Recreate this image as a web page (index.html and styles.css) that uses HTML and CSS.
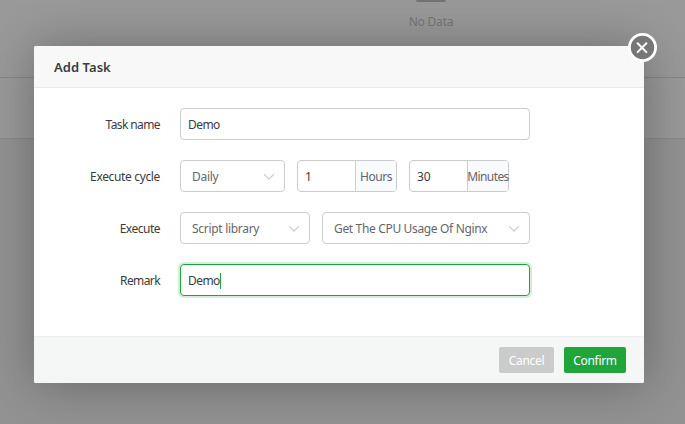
FILE: index.html
```
<!DOCTYPE html>
<html lang="en">
<head>
<meta charset="utf-8">
<title>Add Task</title>
<link rel="stylesheet" href="styles.css">
</head>
<body>
<main class="page">
  <div class="empty"><span class="empty-icon"></span><span class="empty-text">No Data</span></div>
</main>
<section class="modal" role="dialog" aria-label="Add Task">
  <header class="head">Add Task</header>
  <button class="close" aria-label="Close"><svg width="29" height="29" viewBox="0 0 29 29"><circle cx="14.5" cy="14.5" r="13.1" fill="#777" stroke="#fff" stroke-width="2.8"/><path d="M9.6 10.3l8.8 8.8M18.4 10.3l-8.8 8.8" stroke="#fff" stroke-width="2" stroke-linecap="round"/></svg></button>
  <form class="form">
    <div class="row"><label class="label t-name">Task name</label><div class="box wide"><span class="demo">Demo</span></div></div>
    <div class="row"><label class="label t-cycle">Execute cycle</label>
      <div class="box select cycle"><span>Daily</span><svg class="arrow" viewBox="0 0 12 8"><path d="M1 1.2l5 5 5-5"/></svg></div>
      <div class="box number"><span class="value">1</span><span class="unit"><span class="t-hours">Hours</span></span></div>
      <div class="box number"><span class="value">30</span><span class="unit"><span class="t-min">Minutes</span></span></div>
    </div>
    <div class="row"><label class="label t-exec">Execute</label>
      <div class="box select kind"><span>Script library</span><svg class="arrow" viewBox="0 0 12 8"><path d="M1 1.2l5 5 5-5"/></svg></div>
      <div class="box select script"><span class="t-get">Get The CPU Usage Of Nginx</span><svg class="arrow" viewBox="0 0 12 8"><path d="M1 1.2l5 5 5-5"/></svg></div>
    </div>
    <div class="row"><label class="label t-remark">Remark</label><div class="box wide focus"><span class="demo">Demo</span><i class="caret"></i></div></div>
  </form>
  <footer class="foot"><button class="btn cancel"><span>Cancel</span></button><button class="btn confirm"><span>Confirm</span></button></footer>
</section>
</body>
</html>
```
FILE: styles.css
```
* { box-sizing: border-box; }
body { margin: 0; width: 685px; height: 424px; overflow: hidden; background: #929292; color: #3b3b3b; font: 12px/16px "Noto Sans", "Open Sans", sans-serif; }
button { font: inherit; border: 0; padding: 0; }
.page { height: 139px; background: #999; border-bottom: 1px solid #8a8a8a; }
.empty { height: 78px; padding-left: 177px; display: flex; flex-direction: column; align-items: center; border-bottom: 1px solid #858585; color: #757575; }
.empty-icon { width: 30px; height: 2px; background: #737373; border-radius: 0 0 4px 4px; }
.empty-text { margin-top: 12px; letter-spacing: -.2px; }
.modal { position: absolute; left: 34px; top: 46px; width: 610px; height: 337px; display: flex; flex-direction: column; background: #fff; border-radius: 2px; box-shadow: 1px 1px 50px rgba(0,0,0,.3); }
.head { height: 42px; padding-left: 20px; border-bottom: 1px solid #eaeaea; border-radius: 2px 2px 0 0; background: #f8f8f8; font-size: 13px; font-weight: 600; line-height: 42px; letter-spacing: .05px; }
.close { position: absolute; right: -13px; top: -13px; width: 29px; height: 29px; background: none; }
.close svg { display: block; }
.form { flex: 1; padding-top: 20px; display: flex; flex-direction: column; gap: 20px; }
.row { display: flex; gap: 12px; height: 32px; }
.label { width: 126px; margin-right: 8px; line-height: 33px; text-align: right; white-space: nowrap; letter-spacing: -.35px; }
.t-name, .t-remark { letter-spacing: -.6px; }
.t-exec { letter-spacing: -.5px; }
.box { height: 32px; display: flex; align-items: center; border: 1px solid #ccc; border-radius: 4px; padding: 1px 7px 0; white-space: nowrap; }
.wide { width: 350px; }
.demo { letter-spacing: -.55px; }
.select { padding: 1px 9px 0 11px; justify-content: space-between; color: #666; letter-spacing: -.3px; }
.t-get { letter-spacing: -.34px; }
.cycle { width: 105px; }
.kind { width: 130px; }
.script { width: 208px; }
.arrow { width: 12px; height: 8px; fill: none; stroke: #c7c9cd; stroke-width: 1.1; }
.number { width: 100px; padding: 0; }
.value { flex: 1; padding: 1px 0 0 7px; letter-spacing: -.2px; }
.unit { flex: none; width: 41px; height: 30px; padding-top: 1px; display: flex; align-items: center; justify-content: center; border-left: 1px solid #ccc; border-radius: 0 3px 3px 0; background: #f9fafc; color: #666; }
.t-hours { color: #5c6472; letter-spacing: -.45px; }
.t-min { flex: none; letter-spacing: -.6px; }
.focus { border-color: #20a53a; box-shadow: 0 0 0 2px #d2edd8; }
.caret { width: 1px; height: 16px; background: #20a53a; }
.foot { height: 47px; padding-right: 18px; display: flex; align-items: center; justify-content: flex-end; gap: 10px; padding-bottom: 1px; border-top: 1px solid #edf0f0; border-radius: 0 0 2px 2px; background: #f5f7f7; }
.btn { height: 26px; border-radius: 2px; color: #fff; letter-spacing: -.3px; padding-top: 2px; }
.cancel { width: 55px; background: #cbcbcb; }
.confirm { width: 62px; background: #20a53a; }
```
